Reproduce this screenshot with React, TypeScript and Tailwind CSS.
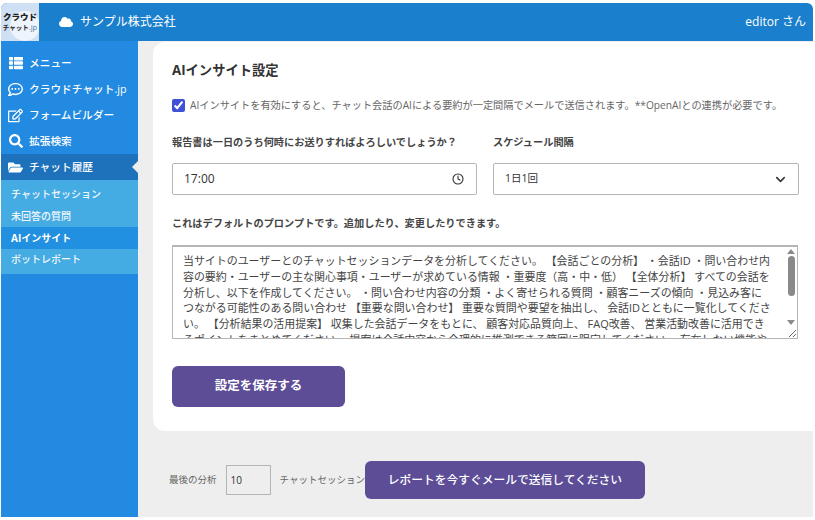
import { FaThList, FaRegCommentDots, FaRegEdit, FaSearch, FaFolderOpen, FaCloud } from 'react-icons/fa';
import { Clock, ChevronDown } from 'lucide-react';

const menu = [
  { icon: FaThList, label: 'メニュー', size: 14 },
  { icon: FaRegCommentDots, label: 'クラウドチャット.jp', size: 15 },
  { icon: FaRegEdit, label: 'フォームビルダー', size: 15 },
  { icon: FaSearch, label: '拡張検索', size: 14 },
];

const subMenu = ['チャットセッション', '未回答の質問', 'AIインサイト', 'ボットレポート'];

const prompt =
  '当サイトのユーザーとのチャットセッションデータを分析してください。 【会話ごとの分析】 ・会話ID ・問い合わせ内容の要約・ユーザーの主な関心事項・ユーザーが求めている情報 ・重要度（高・中・低） 【全体分析】 すべての会話を分析し、以下を作成してください。 ・問い合わせ内容の分類 ・よく寄せられる質問 ・顧客ニーズの傾向 ・見込み客につながる可能性のある問い合わせ 【重要な問い合わせ】 重要な質問や要望を抽出し、 会話IDとともに一覧化してください。 【分析結果の活用提案】 収集した会話データをもとに、 顧客対応品質向上、 FAQ改善、 営業活動改善に活用できるポイントをまとめてください。 提案は会話内容から合理的に推測できる範囲に限定してください。 存在しない機能や';

function Sidebar() {
  return (
    <aside className="w-[137px] shrink-0 bg-[#228ae0] text-white">
      <ul className="pt-[9px]">
        {menu.map(item => {
          const Icon = item.icon;
          return (
            <li key={item.label} className="flex h-[26px] items-center gap-[6px] whitespace-nowrap pl-[7px] text-[10.7px] font-medium">
              <span className="flex w-[15px] justify-center"><Icon size={item.size} /></span>
              <span>{item.label}</span>
            </li>
          );
        })}
        <li className="relative flex h-[26px] items-center gap-[6px] bg-[#1e71bb] pl-[7px] text-[10.7px] font-medium">
          <span className="flex w-[15px] justify-center"><FaFolderOpen size={15} /></span>
          <span>チャット履歴</span>
          <span className="absolute right-0 top-[7px] h-0 w-0 border-y-[6px] border-r-[6px] border-y-transparent border-r-[#eeeeee]" />
        </li>
      </ul>
      <ul className="bg-[#45abe3] pb-[3px] pt-[4px] text-[10px] font-medium">
        {subMenu.map(label => (
          <li key={label} className={label === 'AIインサイト' ? 'flex h-[21.7px] items-center bg-[#2290e0] pl-[10px] font-bold' : 'flex h-[21.7px] items-center pl-[10px] text-[#f1f8fd]'}>
            {label}
          </li>
        ))}
      </ul>
    </aside>
  );
}

function Scrollbar() {
  return (
    <div className="absolute bottom-[12px] right-px top-[2px] flex w-[12px] flex-col items-center justify-between bg-white py-[2px]">
      <span className="h-0 w-0 border-x-[4px] border-b-[5px] border-x-transparent border-b-[#8a8a8a]" />
      <span className="mb-auto mt-[2px] h-[40px] w-[7px] rounded-full bg-[#8a8a8a]" />
      <span className="h-0 w-0 border-x-[4px] border-t-[5px] border-x-transparent border-t-[#8a8a8a]" />
    </div>
  );
}

export default function App() {
  return (
    <div className="h-[520px] w-[815px] bg-white pb-[3px] pl-px pr-[2px] pt-[3px] font-['Open_Sans','Noto_Sans_CJK_JP',sans-serif] text-[#333333]">
      <div className="flex h-full flex-col overflow-hidden rounded-t-[6px]">
        <header className="flex h-[38px] shrink-0 items-center bg-[#1a7fcd] text-white">
          <div className="relative flex h-full w-[38px] flex-col items-center justify-center overflow-hidden bg-[#cfe0f5] leading-none text-[#222222]">
            <span className="absolute left-[9px] top-[8px] h-[30px] w-[30px] rounded-full bg-[#eef4fb]" />
            <span className="relative whitespace-nowrap text-[8.5px] font-black leading-[11px]">クラウド</span>
            <span className="relative whitespace-nowrap text-[6.5px] font-bold leading-[10px]">チャット<span className="text-[7.5px] font-normal text-[#5b7fa8]">.jp</span></span>
          </div>
          <FaCloud size={14} className="ml-5" />
          <span className="ml-[7px] text-[12px]">サンプル株式会社</span>
          <span className="ml-auto pr-[7px] text-[12px]">editor さん</span>
        </header>

        <div className="flex min-h-0 flex-1">
          <Sidebar />
          <main className="flex-1 bg-[#eeeeee] pl-[15px] pt-px">
            <section className="h-[389px] rounded-l-[12px] bg-white pl-[19px] pr-[14px] pt-[18px]">
              <h1 className="text-[13.3px] font-bold leading-[20px]">AIインサイト設定</h1>

              <label className="mt-[17px] flex items-center gap-[5px] whitespace-nowrap text-[10.2px] leading-[16px] text-[#666666]">
                <input type="checkbox" defaultChecked className="h-[13px] w-[13px] accent-[#3f51d5]" />
                <span>AIインサイトを有効にすると、チャット会話のAIによる要約が一定間隔でメールで送信されます。**OpenAIとの連携が必要です。</span>
              </label>

              <div className="mt-[21px] grid grid-cols-[305px_306px] gap-x-[16px]">
                <div>
                  <div className="text-[10.2px] font-bold leading-[16px] text-[#444444]">報告書は一日のうち何時にお送りすればよろしいでしょうか？</div>
                  <div className="mt-[13px] flex h-[32px] items-center justify-between rounded-[2px] border border-[#b5b5b5] pl-[11px] pr-[12px] text-[12px]">
                    <span>17:00</span>
                    <Clock size={12} strokeWidth={2.2} />
                  </div>
                </div>
                <div>
                  <div className="text-[10.2px] font-bold leading-[16px] text-[#444444]">スケジュール間隔</div>
                  <div className="mt-[13px] flex h-[32px] items-center justify-between rounded-[2px] border border-[#b5b5b5] pl-[11px] pr-[10px] text-[10.5px]">
                    <span>1日1回</span>
                    <ChevronDown size={15} strokeWidth={2.5} />
                  </div>
                </div>
              </div>

              <div className="mt-[20px] text-[10.2px] font-bold leading-[16px] text-[#444444]">これはデフォルトのプロンプトです。追加したり、変更したりできます。</div>

              <div className="relative mt-[14px] h-[94px] w-[626px]">
                <textarea
                  readOnly
                  value={prompt}
                  className="block h-full w-full resize-y overflow-hidden border border-t-2 border-[#b5b5b5] pb-0 pl-[10px] pr-[25px] pt-[6px] text-[10.95px] leading-[15.8px] text-[#444444] outline-none"
                />
                <Scrollbar />
              </div>

              <button className="mt-[27px] block h-[41px] w-[173px] rounded-[6px] bg-[#5c4d96] text-[12.5px] font-bold text-white">設定を保存する</button>
            </section>

            <div className="mt-[30px] flex items-center whitespace-nowrap pl-[16px] text-[9.5px] text-[#666666]">
              <span>最後の分析</span>
              <div className="ml-[9px] flex h-[30px] w-[45px] items-center border border-[#b5b5b5] pl-[4px] text-[10px] text-[#333333]">10</div>
              <span className="ml-[9px]">チャットセッション</span>
              <button className="h-[38px] w-[280px] rounded-[6px] bg-[#5c4d96] text-[11.75px] font-medium text-white">レポートを今すぐメールで送信してください</button>
            </div>
          </main>
        </div>
      </div>
    </div>
  );
}
